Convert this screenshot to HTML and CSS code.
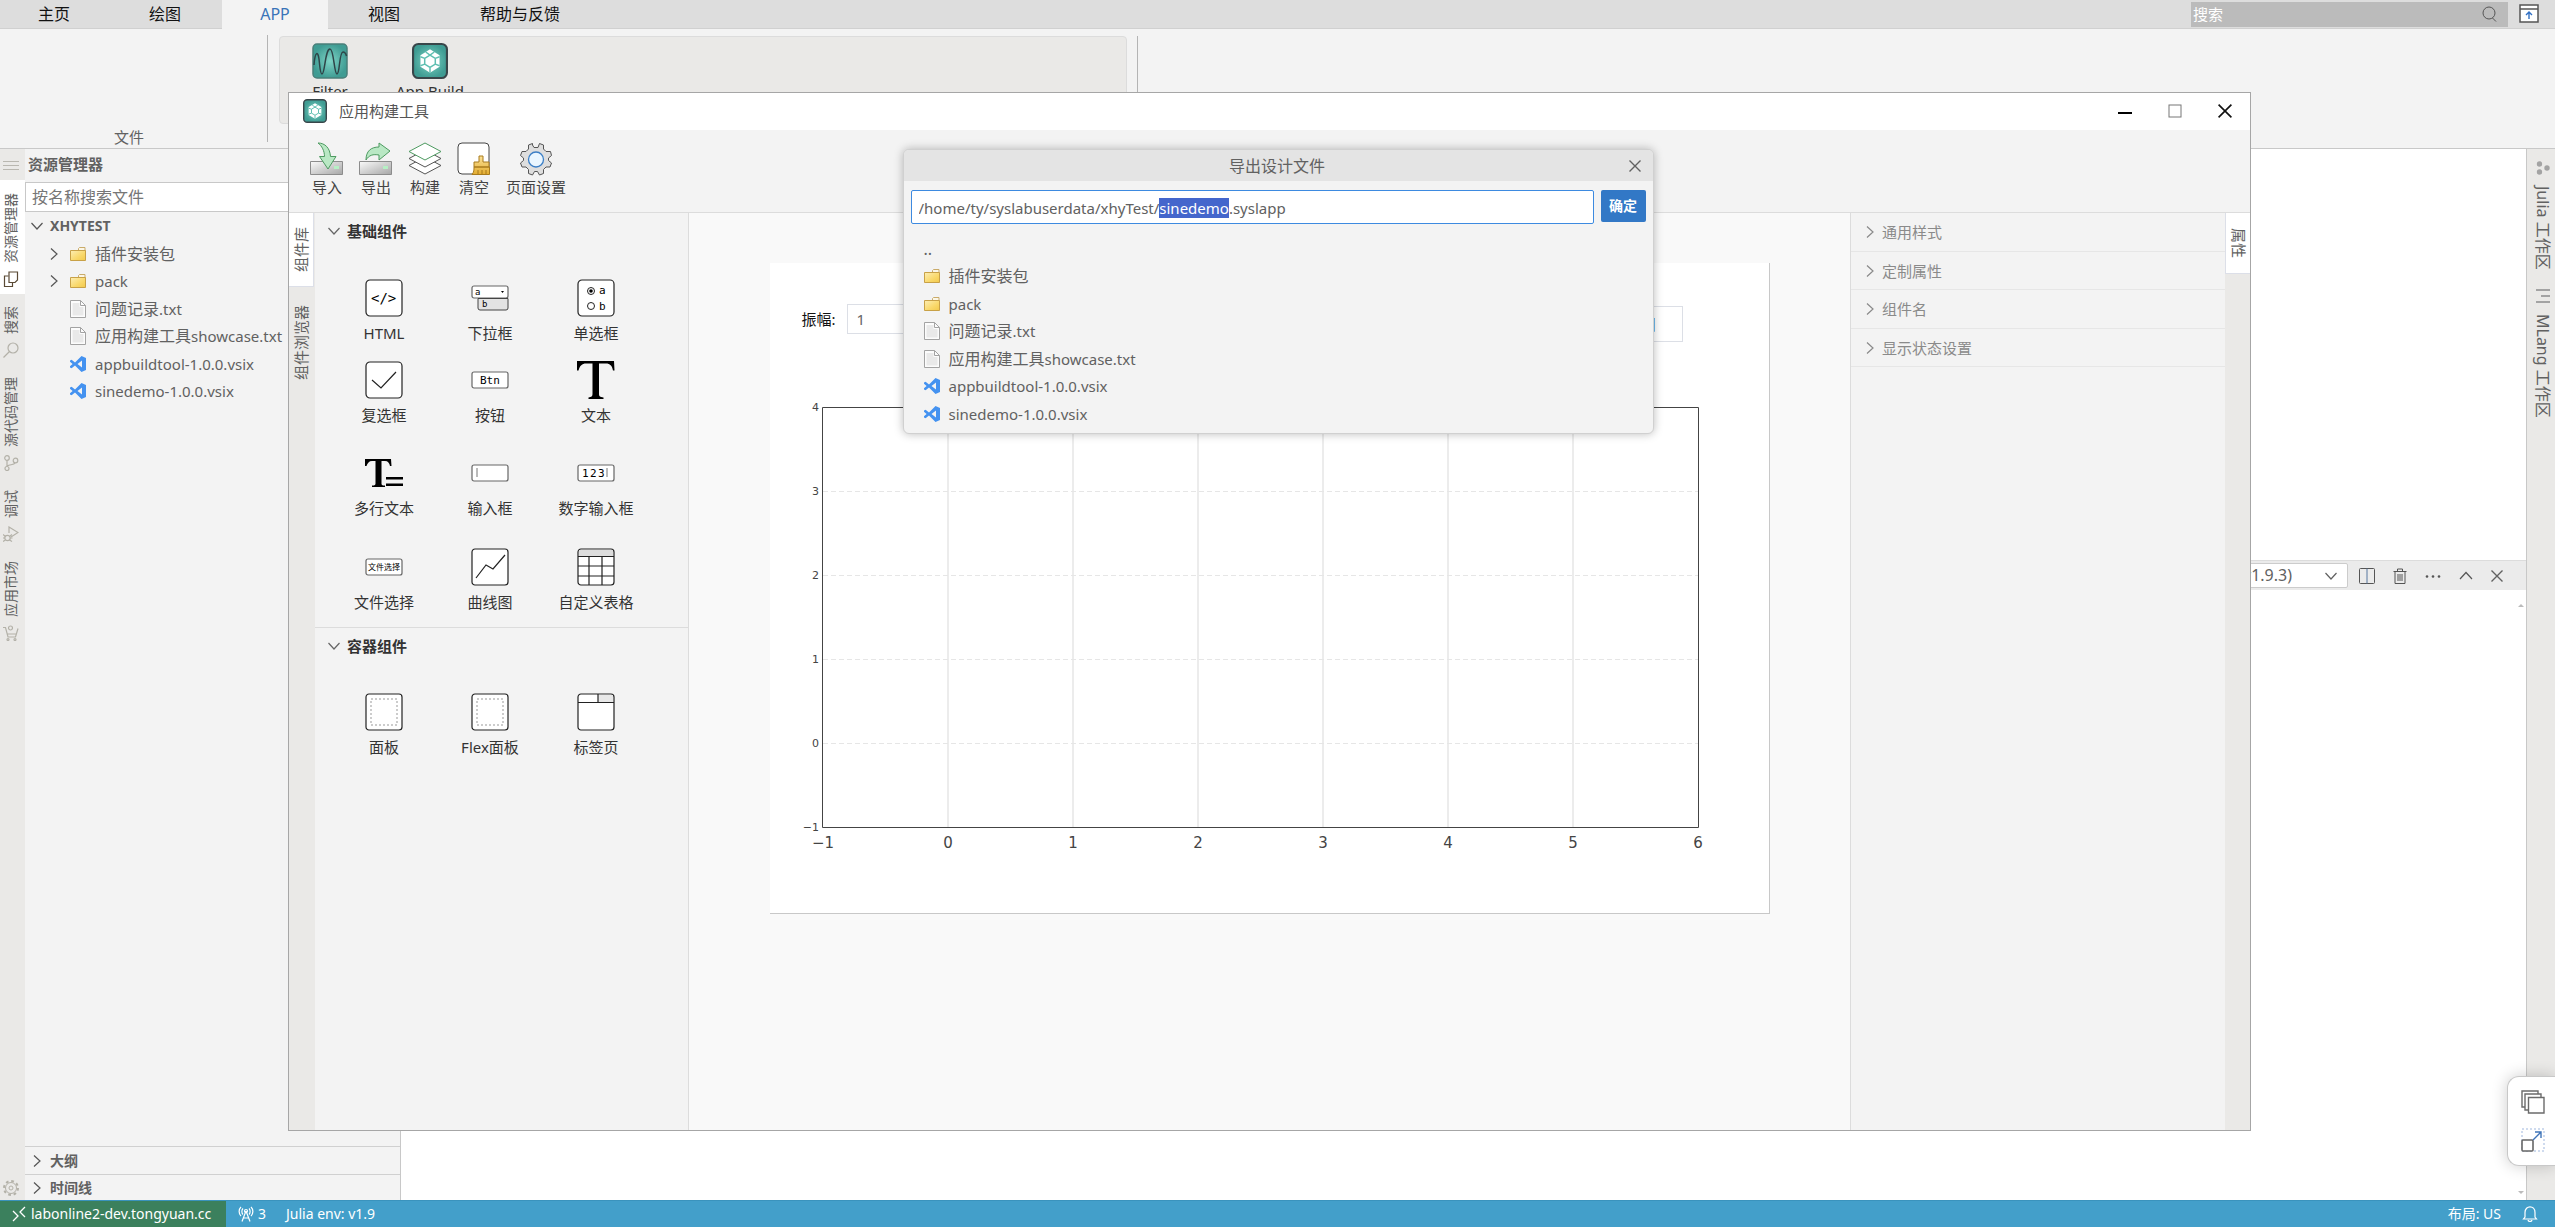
FILE: index.html
```html
<!DOCTYPE html>
<html lang="zh-CN">
<head>
<meta charset="utf-8">
<title>应用构建工具</title>
<link rel="stylesheet" href="styles.css">
</head>
<body>
<svg class="sprite" aria-hidden="true">
  <defs>
    <linearGradient id="g-folder" x1="0" y1="0" x2="1" y2="1"><stop offset="0" stop-color="#fdeeb4"/><stop offset="0.6" stop-color="#f9d86a"/><stop offset="1" stop-color="#f2c94c"/></linearGradient>
    <linearGradient id="g-disk" x1="0" y1="0" x2="1" y2="1"><stop offset="0" stop-color="#fafafa"/><stop offset="1" stop-color="#a6a6a6"/></linearGradient>
    <radialGradient id="g-teal"><stop offset="0" stop-color="#7fd4c6"/><stop offset="1" stop-color="#3f9c93"/></radialGradient>
    <linearGradient id="g-brush" x1="0" y1="0" x2="0" y2="1"><stop offset="0" stop-color="#fbe29a"/><stop offset="1" stop-color="#e3ac2e"/></linearGradient>
  </defs>
  <symbol id="folder" viewBox="0 0 16 16"><path d="M8.500 4V2.500L9.500 1.500H15V5" fill="#fbf6e6" stroke="#c9ab6a"/><path d="M.5 4.500H15.500V14.500H.5Z" fill="url(#g-folder)" stroke="#c8a147"/></symbol>
  <symbol id="file" viewBox="0 0 16 18"><path d="M.5 .5H10.500L15.500 5.500V17.500H.5Z" fill="#fcfcfc" stroke="#a3a3a3"/><path d="M2.500 3H9.500V7H13.500V15.500H2.500Z" fill="#e9e9e9"/><path d="M10.500 .5V5.500H15.500" fill="none" stroke="#a3a3a3"/></symbol>
  <symbol id="vsix" viewBox="0 0 16 16"><path d="M11.500 0L16 2V14L11.500 16L5 9.600L1.600 12.300L0 11.500V10.300L2.600 8L0 5.700V4.500L1.600 3.700L5 6.400ZM12 4.500L7.500 8L12 11.500Z" fill="#4492f0" fill-rule="evenodd"/></symbol>
  <symbol id="down" viewBox="0 0 12 12"><path d="M.5 3L6 9L11.500 3" fill="none" stroke="currentColor" stroke-width="1.200"/></symbol>
  <symbol id="right" viewBox="0 0 12 12"><path d="M3 .5L9 6L3 11.500" fill="none" stroke="currentColor" stroke-width="1.200"/></symbol>
  <symbol id="close" viewBox="0 0 12 12"><path d="M.5 .5L11.500 11.500M11.500 .5L.5 11.500" fill="none" stroke="currentColor" stroke-width="1.400"/></symbol>
  <symbol id="gem" viewBox="0 0 34 34"><rect x="1" y="1" width="32" height="32" rx="5" fill="url(#g-teal)" stroke="#39464a" stroke-width="2"/><path d="M17 6L26 11.500V22.500L17 28L8 22.500V11.500Z" fill="#fff"/><path d="M17 11.500L22 14.500V20L17 23L12 20V14.500ZM17 11.500L13 8.500M17 11.500L21 8.500M22 14.500L26 13M22 20L26 21.500M17 23V28M12 20L8 21.500M12 14.500L8 13" fill="none" stroke="#5fbfb1" stroke-width="1.400"/></symbol>
</svg>

<div class="app">
  <header class="menubar">
    <nav class="tabs">
      <a href="#" class="tab tab-a">主页</a><a href="#" class="tab tab-b">绘图</a><a href="#" class="tab tab-c active">APP</a><a href="#" class="tab tab-d">视图</a><a href="#" class="tab tab-e">帮助与反馈</a>
    </nav>
    <label class="search"><input type="text" placeholder="搜索" aria-label="搜索"><svg width="16" height="16" viewBox="0 0 16 16" fill="none" stroke="#555"><circle cx="8" cy="7" r="6"/><path d="M11.500 12L15 15.500"/></svg></label>
    <button class="icon-btn" aria-label="收起"><svg width="20" height="20" viewBox="0 0 20 20"><rect x="1" y="1" width="18" height="17" fill="#fff" stroke="#555" stroke-width="1.500"/><path d="M1 5H19" stroke="#555" stroke-width="1.500"/><path d="M10 15V8M7 11L10 8L13 11" fill="none" stroke="#2f6fc4" stroke-width="1.400"/></svg></button>
  </header>

  <section class="ribbon">
    <div class="group-file"><span>文件</span></div>
    <div class="group-apps">
      <button class="app-tile"><svg width="36" height="36" viewBox="0 0 36 36"><rect x="1" y="1" width="34" height="34" rx="4" fill="url(#g-teal)" stroke="#4a7f7a" stroke-width="1.500"/><path d="M2 22C3 8 6 8 7 16C8 24 8 31 10 31C13 31 13 6 18 6C22 6 22 31 25 31C28 31 27 9 31 9C33 9 34 11 34.500 13" fill="none" stroke="#2f4548" stroke-width="1.500"/></svg><span>Filter</span></button>
      <button class="app-tile"><svg width="36" height="36"><use href="#gem"/></svg><span>App Build</span></button>
    </div>
  </section>

  <div class="workbench">
    <nav class="activity">
      <button class="menu-btn" aria-label="菜单"><svg width="16" height="10" viewBox="0 0 16 10" stroke="#b9b7b0"><path d="M0 1.500H16M0 5.500H16M0 9.500H16"/></svg></button>
      <button class="act active"><span>资源管理器</span><svg width="16" height="16" viewBox="0 0 16 16" fill="none" stroke="#5a4a35" stroke-width="1.200"><path d="M6 1H14.500V9L12 11.500H6Z"/><path d="M5.500 5H1.500V15.500H9.500V12"/></svg></button>
      <button class="act"><span>搜索</span><svg width="16" height="16" viewBox="0 0 16 16" fill="none" stroke="#b3b1a8" stroke-width="1.200"><circle cx="10" cy="6" r="5"/><path d="M6.500 9.500L.5 15.500"/></svg></button>
      <button class="act"><span>源代码管理</span><svg width="16" height="16" viewBox="0 0 16 16" fill="none" stroke="#b3b1a8" stroke-width="1.200"><circle cx="4" cy="3" r="2.300"/><circle cx="4" cy="13.500" r="2"/><circle cx="12.500" cy="5.500" r="2.300"/><path d="M4 5.500V11.500M12 8C11 10.500 6 9 4.500 11"/></svg></button>
      <button class="act"><span>调试</span><svg width="16" height="16" viewBox="0 0 16 16" fill="none" stroke="#b3b1a8" stroke-width="1.200"><path d="M6 7V1L15 6.500L8 11"/><circle cx="4.500" cy="12" r="2.700"/><path d="M0 8.500L2.500 10.500M0 12H2M0 15.500L2.500 14M9 8.500L6.500 10.500M7 12H9.500M9 15.500L6.500 14"/></svg></button>
      <button class="act"><span>应用市场</span><svg width="16" height="16" viewBox="0 0 16 16" fill="none" stroke="#b3b1a8" stroke-width="1.200"><path d="M0 2.500H2.500L5 12H12.500L15 3.500M4 9H13.500"/><circle cx="7.500" cy="3" r="2"/><circle cx="5" cy="14.500" r="1"/><circle cx="12" cy="14.500" r="1"/></svg></button>
      <button class="gear" aria-label="设置"><svg width="16" height="16" viewBox="0 0 16 16" fill="none" stroke="#b3b1a8"><circle cx="8" cy="8" r="5.500"/><circle cx="8" cy="8" r="2"/><circle cx="8" cy="8" r="7" stroke-width="2" stroke-dasharray="2.750 2.750"/></svg></button>
    </nav>

    <aside class="explorer">
      <h2>资源管理器</h2>
      <input class="file-search" type="text" placeholder="按名称搜索文件" aria-label="按名称搜索文件">
      <ul class="tree">
        <li class="root"><svg class="chev"><use href="#down"/></svg><b>XHYTEST</b></li>
        <li><svg class="chev"><use href="#right"/></svg><svg class="ico"><use href="#folder"/></svg>插件安装包</li>
        <li><svg class="chev"><use href="#right"/></svg><svg class="ico"><use href="#folder"/></svg><span class="latin">pack</span></li>
        <li><i class="chev"></i><svg class="ico doc"><use href="#file"/></svg>问题记录<span class="latin">.txt</span></li>
        <li><i class="chev"></i><svg class="ico doc"><use href="#file"/></svg>应用构建工具<span class="latin">showcase.txt</span></li>
        <li><i class="chev"></i><svg class="ico"><use href="#vsix"/></svg><span class="latin">appbuildtool-1.0.0.vsix</span></li>
        <li><i class="chev"></i><svg class="ico"><use href="#vsix"/></svg><span class="latin">sinedemo-1.0.0.vsix</span></li>
      </ul>
      <div class="fold"><svg class="chev"><use href="#right"/></svg>大纲</div>
      <div class="fold"><svg class="chev"><use href="#right"/></svg>时间线</div>
    </aside>

    <main class="editor">
      <div class="blank"></div>
      <div class="term-bar">
        <label class="term-pick"><select aria-label="终端"><option>Julia REPL (v1.9.3)</option></select><svg width="12" height="12"><use href="#down"/></svg></label>
        <button aria-label="拆分"><svg width="16" height="16" viewBox="0 0 16 16" fill="none" stroke="#555"><rect x=".5" y=".5" width="15" height="15" rx="1"/><path d="M8 .5V15.500" stroke="#56779f"/></svg></button>
        <button aria-label="删除"><svg width="16" height="16" viewBox="0 0 16 16" fill="none" stroke="#555"><path d="M1.500 3.500H14.500M5.500 3V1H10.500V3M3 3.500V15.500H13V3.500M6 6V13M8 6V13M10 6V13"/></svg></button>
        <button aria-label="更多"><svg width="16" height="16" viewBox="0 0 16 16" fill="#555"><circle cx="2" cy="8.500" r="1.300"/><circle cx="8" cy="8.500" r="1.300"/><circle cx="14" cy="8.500" r="1.300"/></svg></button>
        <button aria-label="最大化"><svg width="16" height="16" viewBox="0 0 16 16" fill="none" stroke="#555" stroke-width="1.200"><path d="M2 11L8 4.500L14 11"/></svg></button>
        <button aria-label="关闭"><svg width="12" height="12"><use href="#close"/></svg></button>
      </div>
      <div class="terminal"><i class="up"></i><i class="dn"></i></div>
    </main>

    <nav class="rightbar">
      <button class="side"><svg width="14" height="14" viewBox="0 0 14 14" fill="#a3a3a3"><circle cx="3.500" cy="3" r="2.700"/><circle cx="3.500" cy="11" r="2.700"/><circle cx="11" cy="7" r="2.700"/></svg><span>Julia 工作区</span></button>
      <button class="side"><svg width="14" height="14" viewBox="0 0 14 14" fill="#a3a3a3"><path d="M0 0H14V2H0ZM5 6H14V8H5ZM0 12H14V14H0Z"/></svg><span>MLang 工作区</span></button>
    </nav>
  </div>

  <footer class="status">
    <a href="#" class="remote"><svg width="14" height="16" viewBox="0 0 14 16" fill="none" stroke="#fff" stroke-width="1.300"><path d="M1 5L6 10L1 15M13 1L8 6L13 11"/></svg>labonline2-dev.tongyuan.cc</a>
    <a href="#" class="ports"><svg width="16" height="16" viewBox="0 0 16 16" fill="none" stroke="#fff" stroke-width="1.200"><path d="M3 1C.5 3.500 .5 7.500 3 10M13 1C15.500 3.500 15.500 7.500 13 10M5 2.500C3.500 4 3.500 7 5 8.500M11 2.500C12.500 4 12.500 7 11 8.500M8 5L4 15.500M8 5L12 15.500M5.500 12H10.500"/><circle cx="8" cy="5" r="1.500"/></svg>3</a>
    <a href="#">Julia env: v1.9</a>
    <a href="#" class="layout">布局: US</a>
    <a href="#" class="bell" aria-label="通知"><svg width="16" height="16" viewBox="0 0 16 16" fill="none" stroke="#fff" stroke-width="1.200"><path d="M3 11V6.500C3 -1 13 -1 13 6.500V11L14.500 13H1.500Z"/><path d="M6 14C6.500 16 9.500 16 10 14"/></svg></a>
  </footer>
</div>

<section class="window">
  <header class="titlebar">
    <svg width="24" height="24"><use href="#gem"/></svg><h1>应用构建工具</h1>
    <button aria-label="最小化"><svg width="14" height="14" viewBox="0 0 14 14"><path d="M0 9H14" stroke="#000" stroke-width="2"/></svg></button>
    <button aria-label="最大化"><svg width="14" height="14" viewBox="0 0 14 14"><rect x="1" y="1" width="12" height="12" fill="none" stroke="#777"/></svg></button>
    <button aria-label="关闭"><svg width="14" height="14"><use href="#close"/></svg></button>
  </header>
  <div class="toolbar">
    <button><svg width="34" height="34" viewBox="0 0 34 34"><path d="M.5 19.500H32.500V32.500H.5Z" fill="url(#g-disk)" stroke="#8c8c8c"/><rect x="24" y="24" width="5" height="3" fill="#b6f0c4"/><path d="M8 1C15 1 20 6 20.500 14.500H26L18 27L9.500 14.500H14.500C14.500 9 12 4 8 1Z" fill="#b9e8c4" stroke="#4d9a60"/></svg>导入</button>
    <button><svg width="34" height="34" viewBox="0 0 34 34"><path d="M.5 19.500H32.500V32.500H.5Z" fill="url(#g-disk)" stroke="#8c8c8c"/><rect x="24" y="24" width="5" height="3" fill="#b6f0c4"/><path d="M7 18C7 9 12 5 20 5V1L31 9L20 18V13C14 12 10 13 7 18Z" fill="#b9e8c4" stroke="#4d9a60"/></svg>导出</button>
    <button><svg width="34" height="34" viewBox="0 0 34 34" fill="#fff"><path d="M17 15L33 23.500L17 32L1 23.500Z" stroke="#555"/><path d="M17 8L33 16.500L17 25L1 16.500Z" stroke="#555"/><path d="M17 1L33 9.500L17 18L1 9.500Z" stroke="#4d9a60"/></svg>构建</button>
    <button><svg width="34" height="34" viewBox="0 0 34 34"><rect x="1" y="1" width="31" height="31" rx="4" fill="#fff" stroke="#444"/><path d="M22 14H26V20H32V25H17V20H22ZM17 25H32.500V32.500H15C17 30 17 28 17 25Z" fill="url(#g-brush)" stroke="#a87b1d"/><path d="M21 28V32M25 28V32M29 28V32" stroke="#a87b1d"/></svg>清空</button>
    <button><svg width="34" height="34" viewBox="0 0 34 34"><path d="M13.500 3L15 5.500H19L20.500 1.500L24.500 3L24.500 7L27 9.500L31.500 9.500L32.500 13.500L29.500 16L29.500 18.500L32.500 21L31 25L27 25L24.500 27.500L24.500 31.500L20.500 33L18.500 29.500H15.500L13.500 33L9.500 31.500L9.500 27.500L7 25L3 25L1.500 21L4.500 18.500V16L1.500 13.500L3 9.500L7 9.500L9.500 7L9.500 3L13.500 1.500Z" fill="#dedede" stroke="#555" stroke-linejoin="round"/><circle cx="17" cy="17.500" r="7.500" fill="#eaf6ff" stroke="#3c7fc6" stroke-width="1.300"/></svg>页面设置</button>
  </div>
  <div class="body">
    <nav class="vtabs left"><button class="active">组件库</button><button>组件浏览器</button></nav>
    <aside class="palette">
      <h3><svg width="12" height="12"><use href="#down"/></svg>基础组件</h3>
      <div class="grid basics">
        <button><svg viewBox="0 0 38 38"><rect class="box" x="1" y="1" width="36" height="36" rx="4"/><text x="6" y="24" class="mono">&lt;/&gt;</text></svg>HTML</button>
        <button><svg viewBox="0 0 38 38"><rect class="thin" x="1" y="7" width="36" height="12" rx="2"/><path d="M7 19.500H37V29Q37 31 35 31H9Q7 31 7 29Z" fill="#e3e3e3" stroke="#444"/><text x="4" y="16" class="tiny">a</text><text x="11" y="28" class="tiny">b</text><path d="M30 12H33L31.500 14Z"/></svg>下拉框</button>
        <button><svg viewBox="0 0 38 38"><rect class="box" x="1" y="1" width="36" height="36" rx="4"/><circle cx="14" cy="12" r="3.500" fill="none" stroke="#222"/><circle cx="14" cy="12" r="1.800"/><circle cx="14" cy="27" r="3.500" fill="none" stroke="#222"/><text x="22" y="15" class="small">a</text><text x="22" y="31" class="small">b</text></svg>单选框</button>
        <button><svg viewBox="0 0 38 38"><rect class="box" x="1" y="1" width="36" height="36" rx="4"/><path class="line" d="M7 19L16 27L31 11"/></svg>复选框</button>
        <button><svg viewBox="0 0 38 38"><rect class="thin" x="1" y="11" width="36" height="16" rx="2"/><text x="9" y="23" class="small">Btn</text></svg>按钮</button>
        <button><svg viewBox="0 0 38 38"><path d="M0 0H37L37.500 9.500H36C35 4.500 33 2.500 29 2.500H22V33C22 35.500 23 36 26.500 36.500V38H11.500V36.500C14.500 36 15.500 35.500 15.500 33V2.500H9C5 2.500 3 4.500 1.500 9.500H0Z"/></svg>文本</button>
        <button><svg viewBox="0 0 38 38"><path d="M0 5H26L26.500 12H25C24.500 9 23 7 20 7H16.500V29C16.500 31 17 31.500 20 31.500V33H7V31.500C10 31.500 10.500 31 10.500 29V7H7C4 7 2.500 9 1.500 12H0ZM21 23H38V25.500H21ZM21 29.500H38V32H21Z"/></svg>多行文本</button>
        <button><svg viewBox="0 0 38 38"><rect class="thin" x="1" y="11" width="36" height="16" rx="2"/><path d="M6 14V23" stroke="#777"/></svg>输入框</button>
        <button><svg viewBox="0 0 38 38"><rect class="thin" x="1" y="11" width="36" height="16" rx="2"/><text x="5" y="23" class="small">1</text><text x="13" y="23" class="small">2</text><text x="21" y="23" class="small">3</text><path d="M30 14V23" stroke="#777"/></svg>数字输入框</button>
        <button><svg viewBox="0 0 38 38"><rect class="thin" x="1" y="11" width="36" height="16" rx="2"/><text x="3" y="22" class="cjk">文件选择</text></svg>文件选择</button>
        <button><svg viewBox="0 0 38 38"><rect class="box" x="1" y="1" width="36" height="36" rx="3"/><path class="line" d="M5 30L15 17L22 21L34 7"/></svg>曲线图</button>
        <button><svg viewBox="0 0 38 38"><rect class="box" x="1" y="1" width="36" height="36" rx="3"/><path d="M2 2H36V8H2Z" fill="#ddd"/><path class="line" d="M1 8.500H37M1 18H37M1 28H37M12 8V37M25 8V37"/></svg>自定义表格</button>
      </div>
      <h3 class="second"><svg width="12" height="12"><use href="#down"/></svg>容器组件</h3>
      <div class="grid">
        <button><svg viewBox="0 0 38 38"><rect class="box" x="1" y="1" width="36" height="36" rx="3"/><rect class="dash" x="6" y="6" width="26" height="26"/></svg>面板</button>
        <button><svg viewBox="0 0 38 38"><rect class="box" x="1" y="1" width="36" height="36" rx="3"/><rect class="dash" x="6" y="6" width="26" height="26"/></svg>Flex面板</button>
        <button><svg viewBox="0 0 38 38"><rect class="box" x="1" y="1" width="36" height="36" rx="3"/><path d="M21 2H36V9H21Z" fill="#e8e8e8"/><path class="line" d="M1 9.500H37M21 1V9"/></svg>标签页</button>
      </div>
    </aside>
    <div class="stage">
      <div class="page">
        <div class="form">
          <label>振幅: <input type="text" value="1"></label>
          <button>绘图</button>
        </div>
        <svg class="chart" width="920" height="456" viewBox="0 0 920 456">
          <g stroke="#ececec" stroke-width="2"><path d="M155 10V430M280 10V430M405 10V430M530 10V430M655 10V430M780 10V430"/></g>
          <g stroke="#e6e6e6" stroke-dasharray="5 3"><path d="M30 94.500H905M30 178.500H905M30 262.500H905M30 346.500H905"/></g>
          <path d="M29.500 10.500H905.500V430.500H29.500Z" fill="none" stroke="#444"/>
          <g class="ylab"><text x="26" y="14">4</text><text x="26" y="98">3</text><text x="26" y="182">2</text><text x="26" y="266">1</text><text x="26" y="350">0</text><text x="26" y="434">−1</text></g>
          <g class="xlab"><text x="30" y="451">−1</text><text x="155" y="451">0</text><text x="280" y="451">1</text><text x="405" y="451">2</text><text x="530" y="451">3</text><text x="655" y="451">4</text><text x="780" y="451">5</text><text x="905" y="451">6</text></g>
        </svg>
      </div>
    </div>
    <aside class="props">
      <button><svg width="12" height="12"><use href="#right"/></svg>通用样式</button>
      <button><svg width="12" height="12"><use href="#right"/></svg>定制属性</button>
      <button><svg width="12" height="12"><use href="#right"/></svg>组件名</button>
      <button><svg width="12" height="12"><use href="#right"/></svg>显示状态设置</button>
    </aside>
    <nav class="vtabs right"><button class="active">属性</button></nav>
  </div>
</section>

<div class="dock">
  <button aria-label="窗口"><svg width="24" height="24" viewBox="0 0 24 24" fill="#fff" stroke="#6b6b6b" stroke-width="1.400"><path d="M1 1H17V17H1Z"/><path d="M4 4H20V20H4Z"/><path d="M7.500 7.500H23V23H7.500Z"/></svg></button>
  <button aria-label="展开"><svg width="24" height="24" viewBox="0 0 24 24" fill="none"><rect x="1" y="1" width="22" height="22" stroke="#9fb7de" stroke-dasharray="2 2"/><rect x="1" y="12" width="11" height="11" rx="1" fill="#fff" stroke="#666" stroke-width="1.600"/><path d="M12 12L20 4M14 4H20V10" stroke="#3f74b8" stroke-width="1.400"/></svg></button>
</div>

<section class="dialog" role="dialog" aria-label="导出设计文件">
  <header><h2>导出设计文件</h2><button aria-label="关闭"><svg width="12" height="12"><use href="#close"/></svg></button></header>
  <form>
    <input id="path" type="text" value="/home/ty/syslabuserdata/xhyTest/sinedemo.syslapp" aria-label="路径">
    <button type="button">确定</button>
  </form>
  <ul class="files">
    <li class="latin">..</li>
    <li><svg class="ico"><use href="#folder"/></svg>插件安装包</li>
    <li><svg class="ico"><use href="#folder"/></svg><span class="latin">pack</span></li>
    <li><svg class="ico doc"><use href="#file"/></svg>问题记录<span class="latin">.txt</span></li>
    <li><svg class="ico doc"><use href="#file"/></svg>应用构建工具<span class="latin">showcase.txt</span></li>
    <li><svg class="ico"><use href="#vsix"/></svg><span class="latin">appbuildtool-1.0.0.vsix</span></li>
    <li><svg class="ico"><use href="#vsix"/></svg><span class="latin">sinedemo-1.0.0.vsix</span></li>
  </ul>
</section>
<script src="main.js"></script>
</body>
</html>
```
FILE: styles.css
```css
* { box-sizing: border-box; }
html, body { height: 100%; margin: 0; }
body { position: relative; overflow: hidden; background: #fff; color: #616161; font: 15px/20px "Noto Sans", "Noto Sans CJK SC", sans-serif; }
button, input, select { font: inherit; color: inherit; border: 0; background: none; padding: 0; margin: 0; border-radius: 0; outline: 0; }
a { color: inherit; text-decoration: none; }
ul { list-style: none; margin: 0; padding: 0; }
h1, h2, h3 { margin: 0; font-size: 15px; font-weight: 400; }
svg { display: block; flex: none; }
.sprite { position: absolute; width: 0; height: 0; }
.latin { font-size: 15px; }

.app { height: 100%; display: flex; flex-direction: column; background: #f3f3f3; }

.menubar { flex: none; height: 29px; display: flex; align-items: center; background: #ddd; border-bottom: 1px solid #d0d0d0; padding-right: 16px; }
.tabs { display: flex; flex: 1; align-self: stretch; font-size: 16px; color: #111; }
.tab { height: 29px; line-height: 29px; text-align: center; }
.tab-a { width: 108px; }
.tab-b { width: 114px; }
.tab-c { width: 106px; }
.tab-d { width: 112px; }
.tab-e { width: 160px; }
.tab.active { background: #f3f3f3; color: #3a74b8; }
.search { width: 317px; height: 25px; display: flex; align-items: center; background: #bbb; padding: 0 11px 0 2px; }
.search input { flex: 1; min-width: 0; }
.search input::placeholder { color: #fff; }
.icon-btn { margin-left: 11px; }

.ribbon { flex: none; height: 120px; display: flex; align-items: flex-start; border-bottom: 1px solid #c8c8c8; }
.group-file { width: 268px; height: 107px; margin-top: 6px; border-right: 1px solid #b4b4b4; display: flex; align-items: flex-end; justify-content: center; padding-right: 9px; }
.group-file span { line-height: 10px; }
.group-apps { width: 848px; height: 88px; margin: 7px 12px 0 11px; background: #eae9e7; border: 1px solid #dcdcdc; border-radius: 4px; display: flex; padding-top: 6px; }
.group-apps::after { content: ""; width: 1px; height: 107px; margin: -7px -12px 0 auto; background: #b4b4b4; }
.app-tile { width: 100px; display: flex; flex-direction: column; align-items: center; align-self: flex-start; gap: 2px; font-size: 15px; color: #333; }

.workbench { flex: 1; min-height: 0; display: flex; }
.activity { width: 25px; background: #eae9e7; display: flex; flex-direction: column; align-items: stretch; }
.menu-btn { height: 31px; display: flex; align-items: center; padding-left: 3px; }
.act { display: flex; flex-direction: column; align-items: center; gap: 8px; padding: 13px 4px 7px 0; font-size: 14px; }
.act + .act { padding-top: 12px; }
.act.active { background: #fff; }
.act span { writing-mode: vertical-rl; text-orientation: sideways; transform: rotate(180deg); line-height: 20px; }
.gear { margin-top: auto; padding: 0 0 4px 3px; }

.explorer { width: 376px; display: flex; flex-direction: column; border-right: 1px solid #c8c8c8; }
.explorer h2 { padding: 5px 3px 8px; font-weight: 700; }
.file-search { height: 30px; background: #fff; border: 1px solid #c8c8c8; padding: 0 6px; font-size: 16px; }
.file-search::placeholder { color: #767676; }
.tree { flex: 1; }
.tree li, .files li { display: flex; align-items: center; height: 28px; font-size: 16px; white-space: nowrap; }
.tree li:nth-child(even), .files li:nth-child(odd) { height: 27px; }
.tree li { padding-left: 23px; }
.tree .root { padding-left: 6px; font-size: 14px; }
.chev { width: 12px; height: 12px; margin-right: 10px; color: #555; }
.root .chev, .fold .chev { margin-right: 7px; }
.ico { width: 16px; height: 16px; margin-right: 9px; }
.ico.doc { height: 18px; }
.fold { height: 28px; display: flex; align-items: center; padding-left: 6px; border-top: 1px solid #d0d0d0; font-size: 14px; font-weight: 700; }
.fold:last-child { height: 26px; }

.editor { flex: 1; min-width: 0; display: flex; flex-direction: column; background: #fff; }
.blank { height: 411px; flex: none; }
.term-bar { flex: none; height: 30px; background: #ebebeb; border-top: 1px solid #dcdcdc; display: flex; align-items: center; justify-content: flex-end; gap: 17px; padding-right: 23px; }
.term-pick { position: relative; margin-right: -6px; }
.term-pick select { appearance: none; width: 220px; height: 25px; background: #fff; border: 1px solid #ccc; border-radius: 2px; padding-right: 55px; text-align: right; text-align-last: right; font-size: 16px; line-height: 23px; }
.term-pick svg { position: absolute; right: 11px; top: 7px; }
.terminal { flex: 1; display: flex; flex-direction: column; justify-content: space-between; align-items: flex-end; padding: 14px 2px 6px; }
.terminal i { border: 3px solid transparent; }
.terminal .up { border-bottom-color: #bbb; border-top: 0; }
.terminal .dn { border-top-color: #bbb; border-bottom: 0; }

.rightbar { width: 29px; background: #eae9e7; border-left: 1px solid #c8c8c8; display: flex; flex-direction: column; gap: 19px; padding-top: 12px; }
.side { display: flex; flex-direction: column; align-items: center; gap: 11px; padding-left: 3px; }
.side span { writing-mode: vertical-rl; text-orientation: sideways; font-size: 16px; line-height: 22px; }

.status { flex: none; height: 27px; display: flex; align-items: center; background: #439fca; border-top: 1px solid #3a93bd; color: #fff; font-size: 14px; line-height: 26px; }
.remote { display: flex; align-items: center; gap: 5px; height: 27px; width: 226px; padding-left: 12px; background: #3b805d; white-space: nowrap; }
.ports { display: flex; align-items: center; gap: 4px; width: 60px; padding-left: 12px; }
.layout { margin-left: auto; margin-right: 21px; }
.bell { margin-right: 17px; }

.window { position: absolute; left: 288px; top: 92px; right: 304px; bottom: 96px; display: flex; flex-direction: column; background: #f3f3f3; border: 1px solid #a6a6a6; }
.titlebar { flex: none; height: 37px; background: #fff; display: flex; align-items: center; padding: 0 18px 2px 14px; gap: 36px; color: #111; }
.titlebar h1 { flex: 1; margin-left: -24px; color: #555; }
.toolbar { flex: none; height: 83px; display: flex; align-items: flex-start; gap: 15px; padding: 12px 21px 0; border-bottom: 1px solid #dcdcdc; color: #444; }
.toolbar button { display: flex; flex-direction: column; align-items: center; width: 34px; line-height: 22px; white-space: nowrap; }
.toolbar button:last-child { width: 60px; }
.body { flex: 1; min-height: 0; display: flex; }
.vtabs { width: 25px; background: #eae9e7; display: flex; flex-direction: column; }
.vtabs button { writing-mode: vertical-rl; text-orientation: sideways; width: 25px; line-height: 23px; padding: 14px 0; text-align: center; }
.vtabs.left { width: 26px; }
.vtabs.left button { transform: rotate(180deg); }
.vtabs .active { background: #fff; border: 1px solid #dcdfe8; border-width: 1px 0 0 1px; }
.vtabs.left button + button { padding-bottom: 18px; }
.vtabs.right .active { border-width: 0 0 1px 1px; padding: 15px 0; }

.palette { width: 374px; border-right: 1px solid #dcdcdc; color: #333; }
.palette h3 { display: flex; align-items: center; gap: 7px; height: 36px; padding-left: 13px; font-weight: 700; color: #333; }
.palette h3 svg { color: #666; }
.palette h3.second { border-top: 1px solid #dcdcdc; }
.grid { display: grid; grid-template-columns: 106px 106px 106px; padding: 30px 0 0 16px; }
.basics { grid-template-rows: 82px 93px 94px 79px; }
.grid button { display: flex; flex-direction: column; align-items: center; gap: 6px; white-space: nowrap; }
.grid svg { width: 38px; height: 38px; }
.box { fill: #fff; stroke: #222; stroke-width: 1.200px; }
.thin { fill: #fff; stroke: #666; stroke-width: 1.200px; }
.line { fill: none; stroke: #222; stroke-width: 1.200px; }
.dash { fill: none; stroke: #999; stroke-dasharray: 2 2; }
.mono { font: 14px "DejaVu Sans Mono", monospace; }
.small { font: 11px "DejaVu Sans Mono", monospace; }
.tiny { font: 9px "DejaVu Sans Mono", monospace; }
.cjk { font: 8px "Noto Sans CJK SC", sans-serif; }

.stage { flex: 1; min-width: 0; background: #f9f9f9; display: flex; justify-content: center; align-items: flex-start; padding-top: 50px; }
.page { width: 1000px; background: #fff; border: solid #c8c8c8; border-width: 0 1px 1px 0; padding: 41px 0 60px 23px; }
.form { display: flex; justify-content: space-between; padding: 0 86px 0 9px; height: 93px; align-items: flex-start; color: #111; }
.form label { display: flex; align-items: center; gap: 11px; }
.form input { width: 160px; height: 30px; border: 1px solid #dcdfe6; padding-left: 9px; font-size: 15px; color: #666; }
.form button { width: 84px; height: 36px; margin-top: 2px; border: 1px solid #dcdfe6; }
.chart text { font-family: "DejaVu Sans", sans-serif; fill: #444; }
.ylab text { font-size: 11px; text-anchor: end; }
.xlab text { font-size: 15px; text-anchor: middle; }

.props { width: 375px; border-left: 1px solid #dcdcdc; color: #8a8a8a; }
.props button { display: flex; align-items: center; gap: 6px; width: 100%; height: 39px; padding-left: 13px; border-bottom: 1px solid #e6e6e6; }
.props button:nth-child(even) { height: 38px; }

.dock { position: absolute; right: 0; top: 1076px; width: 48px; height: 90px; background: #fff; border: 1px solid #c8c8c8; border-right: 0; border-radius: 12px 0 0 12px; box-shadow: 0 0 16px #0003; display: flex; flex-direction: column; gap: 14px; padding: 13px 0 0 13px; }

.dialog { position: absolute; left: 50%; top: 149px; width: 751px; margin-left: -375px; background: #f3f3f3; border: 1px solid #d0d0d0; border-radius: 6px; box-shadow: 0 0 10px #0004; overflow: hidden; }
.dialog header { display: flex; align-items: center; height: 31px; background: #e4e4e4; padding-right: 12px; }
.dialog h2 { flex: 1; padding-left: 22px; text-align: center; font-size: 16px; }
.dialog form { display: flex; align-items: flex-start; gap: 7px; padding: 9px 7px 0; }
.dialog form input { flex: 1; height: 34px; background: #fff; border: 1px solid #3d8ae0; border-radius: 2px; padding: 2px 7px 0; }
.dialog form input::selection { background: #4466cc; color: #fff; }
.dialog form button { width: 45px; height: 32px; background: #3278c6; color: #fff; border-radius: 2px; font-size: 14px; font-weight: 700; }
.files { padding: 11px 20px 6px; }
```
FILE: main.js
```js
const path = document.getElementById("path");
const start = path.value.indexOf("sinedemo");
path.focus();
path.setSelectionRange(start, start + "sinedemo".length);
```
